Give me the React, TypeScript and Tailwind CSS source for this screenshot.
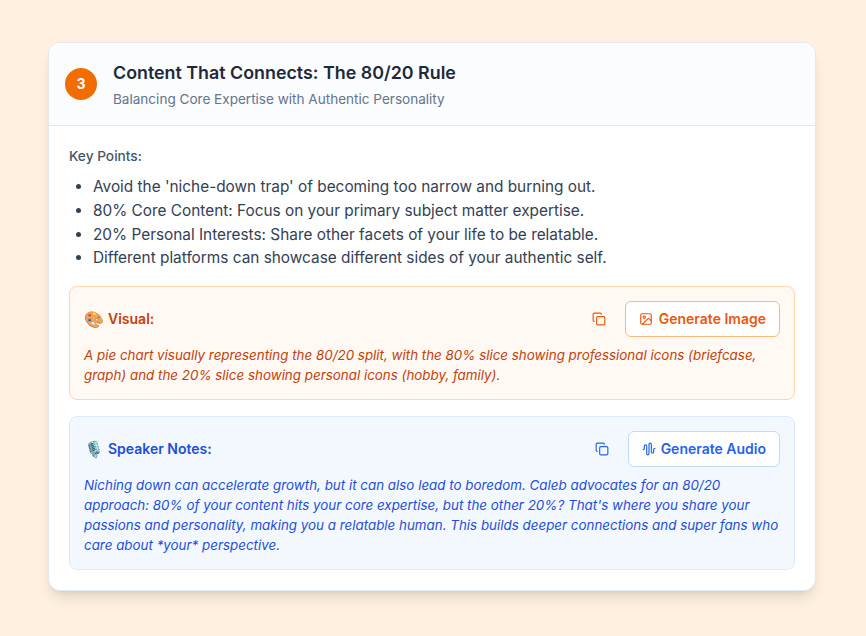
import { Copy, Image, AudioWaveform } from "lucide-react";

const points = [
  "Avoid the 'niche-down trap' of becoming too narrow and burning out.",
  "80% Core Content: Focus on your primary subject matter expertise.",
  "20% Personal Interests: Share other facets of your life to be relatable.",
  "Different platforms can showcase different sides of your authentic self.",
];

export default function App() {
  return (
    <div className="min-h-[636px] bg-[#fff0e0] pl-12 pt-[42px] font-['Inter',sans-serif]">
      <div className="w-[768px] overflow-hidden rounded-xl border border-[#e2e8f0] bg-white shadow-lg">
        <header className="flex items-center gap-4 border-b border-[#e2e8f0] bg-[#fbfcfe] p-4">
          <div className="flex h-8 w-8 items-center justify-center rounded-full bg-[#f26d00] text-sm font-bold text-white">3</div>
          <div>
            <h2 className="text-[17.85px] leading-7 font-semibold text-[#1e293b]">Content That Connects: The 80/20 Rule</h2>
            <p className="mt-0.5 text-[13.55px] leading-5 text-[#64748b]">Balancing Core Expertise with Authentic Personality</p>
          </div>
        </header>
        <div className="flex flex-col gap-4 p-5">
          <div>
            <h3 className="mb-[9px] text-[13.7px] leading-5 font-medium text-[#475569]">Key Points:</h3>
            <ul className="list-disc pl-6 text-[15.36px] leading-[23.75px] text-[#334155]">
              {points.map((p) => <li key={p}>{p}</li>)}
            </ul>
          </div>
          <section className="rounded-lg border border-[#fed7aa] bg-[#fff8f3] p-3.5">
            <div className="mb-2 flex items-center justify-between">
              <div className="flex items-center gap-1 text-sm font-semibold text-[#c2410c]"><span className="text-base">🎨</span>Visual:</div>
              <div className="flex items-center gap-[13px]">
                <button className="p-1.5 text-[#ea580c]"><Copy size={14} /></button>
                <button className="flex h-9 items-center gap-1.5 rounded-md border border-[#fdba74] bg-white px-[13px] text-sm font-semibold text-[#ea580c]"><Image size={14} />Generate Image</button>
              </div>
            </div>
            <p className="text-[13.38px] leading-5 italic text-[#c2410c]">A pie chart visually representing the 80/20 split, with the 80% slice showing professional icons (briefcase, graph) and the 20% slice showing personal icons (hobby, family).</p>
          </section>
          <section className="rounded-lg border border-[#dbeafe] bg-[#f3f8ff] p-3.5">
            <div className="mb-2 flex items-center justify-between">
              <div className="flex items-center gap-1 text-sm font-semibold text-[#1d4ed8]"><span className="text-base">🎙️</span>Speaker Notes:</div>
              <div className="flex items-center gap-[13px]">
                <button className="p-1.5 text-[#2563eb]"><Copy size={14} /></button>
                <button className="flex h-9 items-center gap-[5px] rounded-md border border-[#bfdbfe] bg-white px-[13px] text-sm font-semibold text-[#2563eb]"><AudioWaveform size={14} />Generate Audio</button>
              </div>
            </div>
            <p className="text-[13.38px] leading-5 italic text-[#1d4ed8]">Niching down can accelerate growth, but it can also lead to boredom. Caleb advocates for an 80/20 approach: 80% of your content hits your core expertise, but the other 20%? That's where you share your passions and personality, making you a relatable human. This builds deeper connections and super fans who care about *your* perspective.</p>
          </section>
        </div>
      </div>
    </div>
  );
}
